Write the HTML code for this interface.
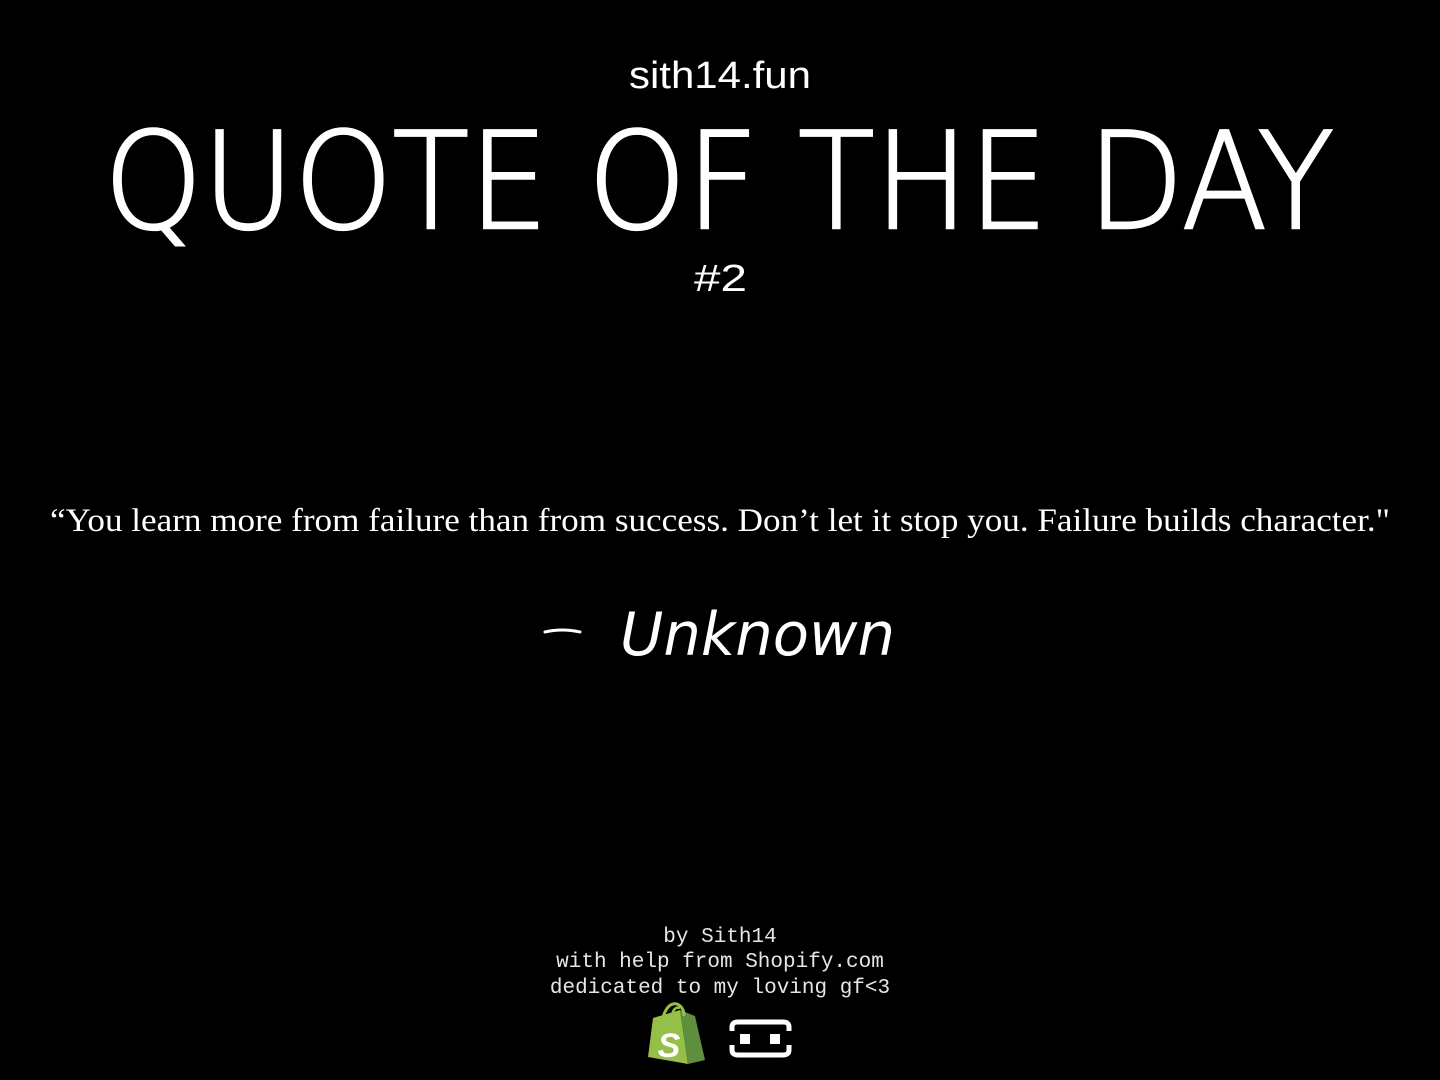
<!DOCTYPE html>
<html><head><meta charset="utf-8"><style>
html,body{margin:0;padding:0;background:#000;width:1440px;height:1080px;overflow:hidden}
svg{display:block}
</style></head><body>
<svg width="1440" height="1080" viewBox="0 0 1440 1080" xmlns="http://www.w3.org/2000/svg">
<rect width="1440" height="1080" fill="#000"/>
<text x="629" y="88" font-family="Liberation Sans, sans-serif" font-size="38" fill="#fff" textLength="182" lengthAdjust="spacingAndGlyphs">sith14.fun</text>
<text x="104" y="228" font-family="DejaVu Sans, sans-serif" font-weight="200" font-size="134" fill="#fff" stroke="#fff" stroke-width="2.5" textLength="1230" lengthAdjust="spacingAndGlyphs">QUOTE OF THE DAY</text>
<text x="694" y="291" font-family="Liberation Sans, sans-serif" font-size="38" fill="#fff" textLength="53" lengthAdjust="spacingAndGlyphs">#2</text>
<text x="50" y="531" font-family="Liberation Serif, serif" font-size="33" fill="#fff" textLength="1340" lengthAdjust="spacingAndGlyphs">“You learn more from failure than from success. Don’t let it stop you. Failure builds character."</text>
<path d="M545 632 Q562 628 580 632" stroke="#fff" stroke-width="3" fill="none" stroke-linecap="round"/>
<text x="620" y="655" font-family="DejaVu Sans, sans-serif" font-style="italic" font-size="60" font-weight="200" fill="#fff" textLength="275" lengthAdjust="spacingAndGlyphs">Unknown</text>
<g font-family="Liberation Mono, monospace" font-size="21" fill="#e6e6e6" text-anchor="middle">
<text x="720" y="942">by Sith14</text>
<text x="720" y="967">with help from Shopify.com</text>
<text x="720" y="993">dedicated to my loving gf&lt;3</text>
</g>
<path d="M653 1018 L680 1010 L688 1064 L648 1057 Z" fill="#95bf47"/>
<path d="M680 1010 L695 1016 L705 1060 L688 1064 Z" fill="#5e8e3e"/>
<path d="M663 1017 Q668 1002 677 1004 Q684 1007 684 1016" stroke="#95bf47" stroke-width="3" fill="none"/>
<path d="M672 1015 Q674 1006 680 1008" stroke="#95bf47" stroke-width="2.5" fill="none"/>
<text x="669" y="1057" font-family="Liberation Sans, sans-serif" font-weight="bold" font-style="italic" font-size="34" fill="#fff" text-anchor="middle">S</text>
<path d="M732 1031 V1027 Q732 1022 738 1022 H783 Q789 1022 789 1027 V1031" stroke="#fff" stroke-width="5" fill="none"/>
<path d="M732 1045 V1050 Q732 1055 738 1055 H783 Q789 1055 789 1050 V1045" stroke="#fff" stroke-width="5" fill="none"/>
<rect x="740" y="1034" width="10" height="10" fill="#fff"/>
<rect x="770" y="1034" width="10" height="10" fill="#fff"/>
</svg>
</body></html>
